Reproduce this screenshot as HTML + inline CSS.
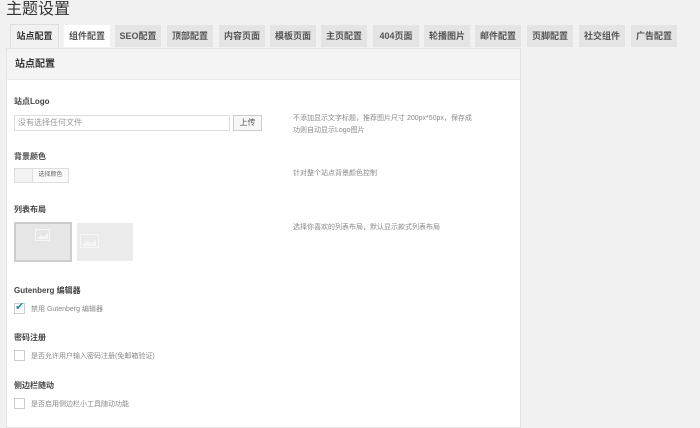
<!DOCTYPE html>
<html><head><meta charset="utf-8"><style>
*{margin:0;padding:0;box-sizing:border-box}
body{width:700px;height:412px;overflow:hidden;background:#f1f1f1;font-family:"Liberation Sans","Noto Sans CJK SC",sans-serif;color:#333;position:relative}
.a{position:absolute}
h1{position:absolute;left:6px;top:0;font-size:16px;font-weight:normal;color:#333;line-height:20px}
.tab{position:absolute;top:25px;height:22px;width:46px;background:#e4e4e4;font-size:9px;font-weight:bold;color:#555;text-align:center;line-height:22px}
.panel{position:absolute;left:6px;top:48px;width:515px;height:380px;border:1px solid #e3e3e3;background:#fff}
.ph{height:31px;background:#f4f4f4;border-bottom:1px solid #ececec;font-size:10px;font-weight:bold;line-height:31px;padding-left:8px;color:#333}
.lb{position:absolute;left:14px;font-size:8px;font-weight:bold;color:#444}
.ds{position:absolute;left:293px;font-size:7px;color:#888;line-height:12px}
.cb{position:absolute;left:14px;width:11px;height:11px;border:1px solid #ccc;background:#fff}
.ct{position:absolute;left:31px;font-size:7px;color:#888}
</style></head><body>
<h1>主题设置</h1>
<div class="tab" style="left:10px;top:24px;height:24px;width:49px;background:#f1f1f1;border:1px solid #ddd;border-bottom:none;color:#333">站点配置</div>
<div class="tab" style="left:64px;background:#fff">组件配置</div>
<div class="tab" style="left:115px">SEO配置</div>
<div class="tab" style="left:167px">顶部配置</div>
<div class="tab" style="left:219px">内容页面</div>
<div class="tab" style="left:270px">模板页面</div>
<div class="tab" style="left:321px">主页配置</div>
<div class="tab" style="left:373px">404页面</div>
<div class="tab" style="left:424px">轮播图片</div>
<div class="tab" style="left:475px">邮件配置</div>
<div class="tab" style="left:527px">页脚配置</div>
<div class="tab" style="left:579px">社交组件</div>
<div class="tab" style="left:631px">广告配置</div>
<div class="panel"><div class="ph">站点配置</div></div>
<div class="lb" style="top:96px">站点Logo</div>
<div class="a" style="left:14px;top:115px;width:216px;height:16px;border:1px solid #ddd;background:#fff;font-size:8px;color:#999;line-height:14px;padding-left:3px">没有选择任何文件</div>
<div class="a" style="left:233px;top:115px;width:29px;height:16px;border:1px solid #ccc;background:#f7f7f7;font-size:8px;color:#555;text-align:center;line-height:14px">上传</div>
<div class="ds" style="top:113px">不添加显示文字标题，推荐图片尺寸 200px*50px，保存成<br>功则自动显示Logo图片</div>
<div class="lb" style="top:151px">背景颜色</div>
<div class="a" style="left:14px;top:168px;width:55px;height:15px;border:1px solid #ddd;background:#f3f3f3"></div>
<div class="a" style="left:32px;top:168px;width:37px;height:15px;border:1px solid #ddd;background:#fafafa;font-size:6px;color:#666;text-align:center;line-height:13px">选择颜色</div>
<div class="ds" style="top:168px">针对整个站点背景颜色控制</div>
<div class="lb" style="top:204px">列表布局</div>
<div class="a" style="left:14px;top:222px;width:58px;height:40px;border:2px solid #ccc;background:#e6e6e6"></div>
<svg class="a" style="left:35px;top:229px" width="15" height="12" viewBox="0 0 15 12"><rect x="0.5" y="0.5" width="14" height="11" fill="none" stroke="#f6f6f6"/><path d="M2 10 L6 6 L9 8 L13 4 L13 10Z" fill="#f6f6f6"/></svg>
<div class="a" style="left:77px;top:223px;width:56px;height:38px;background:#ebebeb"></div>
<svg class="a" style="left:80px;top:234px" width="19" height="14" viewBox="0 0 19 14"><rect x="0.5" y="0.5" width="18" height="13" fill="none" stroke="#f6f6f6"/><path d="M2 12 L7 7 L11 10 L16 5 L16 12Z" fill="#f6f6f6"/></svg>
<div class="ds" style="top:222px">选择你喜欢的列表布局，默认显示款式列表布局</div>
<div class="lb" style="top:285px">Gutenberg 编辑器</div>
<div class="cb" style="top:303px"></div>
<div class="a" style="left:15px;top:300px;font-size:11px;color:#1e8cbe">✔</div>
<div class="ct" style="top:304px">禁用 Gutenberg 编辑器</div>
<div class="lb" style="top:332px">密码注册</div>
<div class="cb" style="top:350px"></div>
<div class="ct" style="top:351px">是否允许用户输入密码注册(免邮箱验证)</div>
<div class="lb" style="top:380px">侧边栏随动</div>
<div class="cb" style="top:398px"></div>
<div class="ct" style="top:399px">是否启用侧边栏小工具随动功能</div>
</body></html>
